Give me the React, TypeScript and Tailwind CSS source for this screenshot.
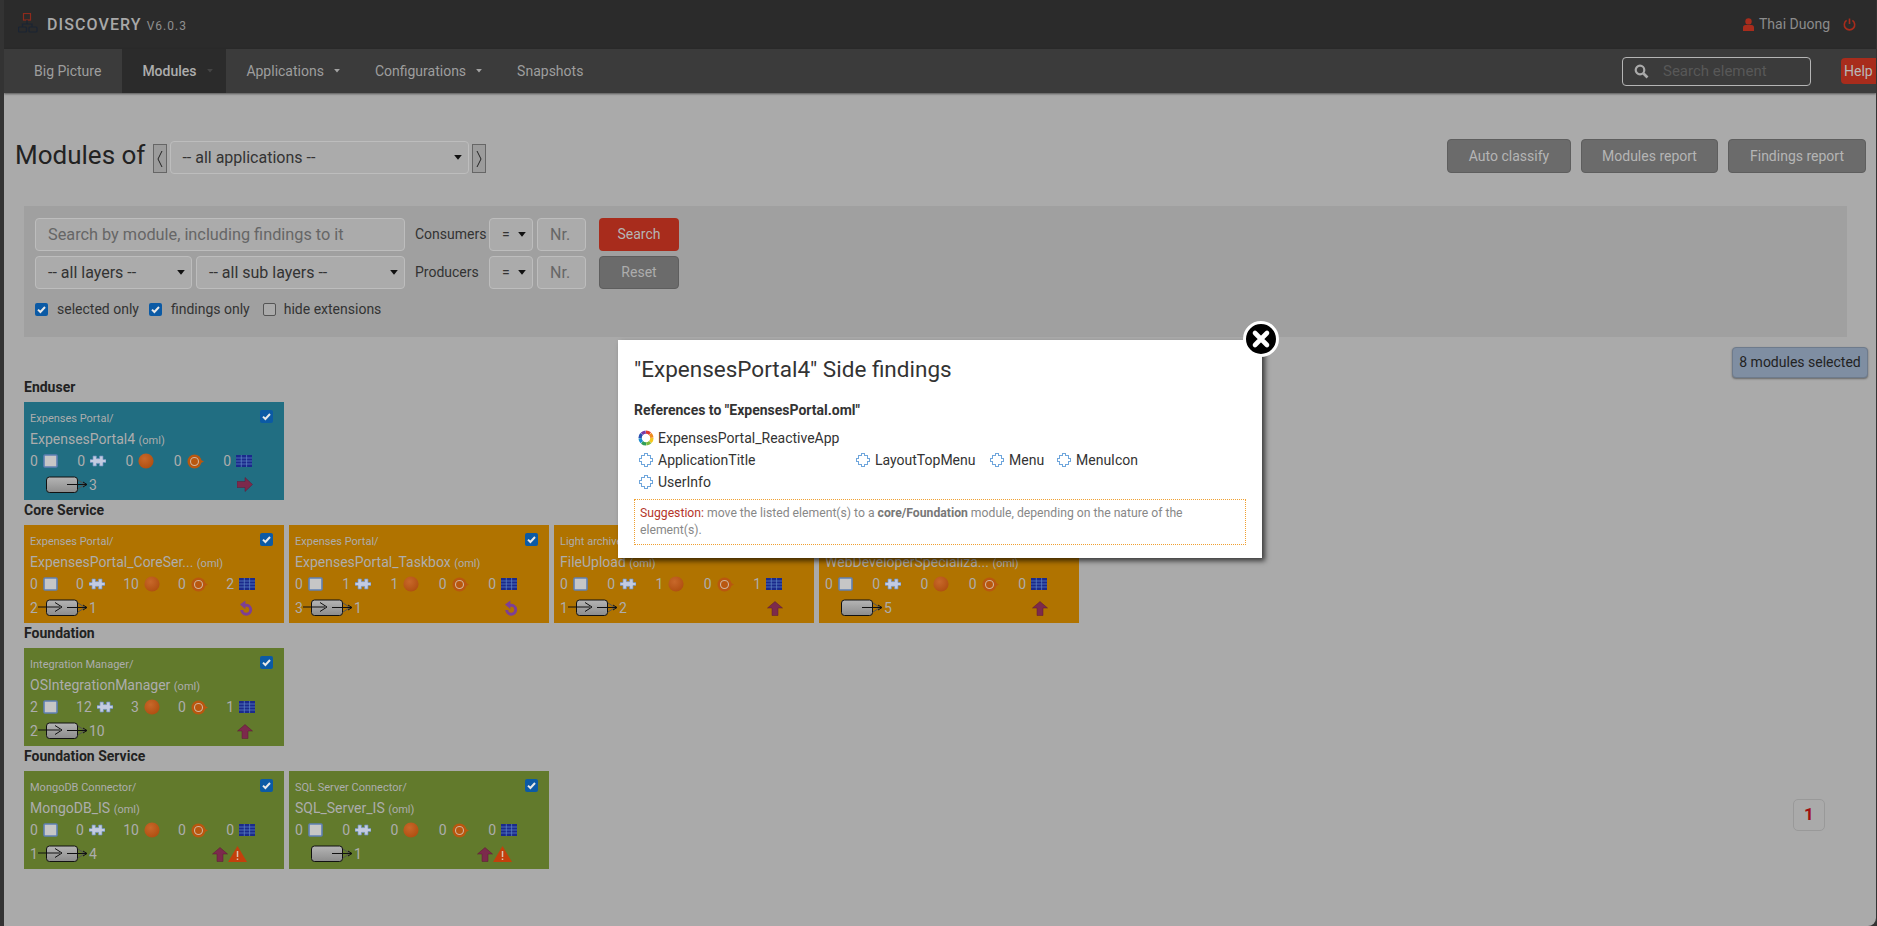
import React from "react";

const Caret = ({ c = "#111", w = 8 }: { c?: string; w?: number }) => (
  <svg width={w} height={w * 0.6} viewBox="0 0 8 5" className="shrink-0"><path d="M0 0h8L4 5z" fill={c} /></svg>
);

const Sel = ({ label, cls }: { label: string; cls: string }) => (
  <div className={`flex items-center justify-between rounded border border-[#bdbdbd] bg-[#ababab] text-[#333] ${cls}`}>
    <span>{label}</span>
    <Caret />
  </div>
);

const Check = ({ on = true }: { on?: boolean }) =>
  on ? (
    <div className="flex h-[13px] w-[13px] shrink-0 items-center justify-center rounded-[2px] bg-[#0b5aa5]">
      <svg width="11" height="11" viewBox="0 0 11 11"><path d="M2 5.6l2.4 2.4L9 3" fill="none" stroke="#e8e8e8" strokeWidth="2" /></svg>
    </div>
  ) : (
    <div className="h-[13px] w-[13px] shrink-0 rounded-[2px] border border-[#555] bg-[#aaa]" />
  );

const IcoBox = () => (
  <svg width="15" height="14" viewBox="0 0 15 14"><rect x="1" y="1" width="13" height="12" rx="1" fill="#c6c6c6" stroke="#5f80b4" strokeWidth="1.6" /></svg>
);
const IcoPuzzle = () => (
  <svg width="16" height="12" viewBox="0 0 16 12">
    <path d="M0 4.5h3V1h3.4v2.6h3.2V1H13v3.5h3v3h-3V11H9.6V8.4H6.4V11H3V7.5H0z" fill="#c3cbe0" stroke="#6d8fc0" strokeWidth=".7" />
  </svg>
);
const IcoBall = ({ id }: { id: string }) => (
  <svg width="16" height="16" viewBox="0 0 16 16">
    <defs>
      <radialGradient id={id} cx=".4" cy=".35" r=".75"><stop offset="0" stopColor="#c8682a" /><stop offset="1" stopColor="#ad4c0e" /></radialGradient>
    </defs>
    <circle cx="8" cy="8" r="7.6" fill={`url(#${id})`} />
  </svg>
);
const IcoRing = () => (
  <svg width="17" height="15" viewBox="0 0 17 15">
    <circle cx="7.5" cy="7.5" r="7" fill="#b9570f" />
    <circle cx="7.5" cy="7.5" r="4" fill="#b9570f" stroke="#d0b49c" strokeWidth="1.1" />
    <path d="M14 6l3 1.5-3 1.5z" fill="#b9570f" />
  </svg>
);
const IcoGrid = () => (
  <svg width="16" height="12" viewBox="0 0 16 12">
    <rect width="16" height="12" fill="#1b2a8c" />
    <path d="M0 3h16M0 6h16M0 9h16M5.3 0v12M10.6 0v12" stroke="#5f86c6" strokeWidth=".7" />
  </svg>
);
const IcoRight = () => (
  <svg width="16" height="16" viewBox="0 0 16 16"><path d="M0 4.5h8V0.5l7.5 7-7.5 7v-4H0z" fill="#7c2a4c" stroke="#5d1a35" strokeWidth=".5" /></svg>
);
const IcoUp = () => (
  <svg width="16" height="15" viewBox="0 0 16 15"><path d="M8 .5l7.5 6.5H11v7.5H5V7H.5z" fill="#7c2a4c" stroke="#5d1a35" strokeWidth=".5" /></svg>
);
const IcoUndo = () => (
  <svg width="14" height="17" viewBox="0 0 14 17">
    <path d="M5 5.2h2.5a4.5 4.5 0 1 1-4.8 4.8" fill="none" stroke="#7d3f95" strokeWidth="3" />
    <path d="M6.4 .4v8.8L1 4.6z" fill="#7d3f95" />
  </svg>
);
const IcoWarn = () => (
  <svg width="19" height="16" viewBox="0 0 19 16" className="mr-[6px]">
    <path d="M9.5 0L19 16H0z" fill="#c3400c" />
    <path d="M9.5 5v6M9.5 12.4v1.6" stroke="#d9c4b4" strokeWidth="1.5" />
  </svg>
);

const Flow = ({ left }: { left: boolean }) => (
  <svg width="50" height="18" viewBox="0 0 50 18" className="shrink-0">
    <defs>
      <linearGradient id="fg" x1="0" y1="0" x2="0" y2="1"><stop offset="0" stopColor="#b5b5b5" /><stop offset="1" stopColor="#8c8c8c" /></linearGradient>
    </defs>
    <rect x="8.5" y="1" width="31" height="15.5" rx="3" fill="url(#fg)" stroke="#111" strokeWidth="1" />
    <path d="M40 4l7 4.5-7 4.5" fill="none" stroke="#555" strokeWidth="1" />
    <path d="M29 8.5h20M45 6l4 2.5-4 2.5" fill="none" stroke="#111" strokeWidth="1" />
    {left && <path d="M0 8h22M17 3.5l7 4.5-7 4.5" fill="none" stroke="#111" strokeWidth="1" />}
  </svg>
);

type M = {
  bg: string;
  path: string;
  name: string;
  s: string[];
  l: string;
  r: string;
  st: string[];
  wide?: boolean;
};

const Stat = ({ n, children }: { n: string; children: React.ReactNode }) => (
  <div className="flex items-center gap-[5px]">
    <span>{n}</span>
    {children}
  </div>
);

const Card = ({ m, i }: { m: M; i: string }) => (
  <div className={`relative h-[98px] w-[260px] shrink-0 pl-[6px] pt-[10px] text-[14px] text-[#adadad] ${m.bg}`}>
    <div className="absolute right-[11px] top-[8px]"><Check /></div>
    <div className="h-[14px] text-[11px] leading-[14px]">{m.path}</div>
    <div className="mt-[1px] h-[24px] whitespace-nowrap leading-[24px]">
      {m.name} <span className="text-[11px]">(oml)</span>
    </div>
    <div className={`flex h-[20px] items-center justify-between ${m.wide ? "w-[225px]" : "w-[222px]"}`}>
      <Stat n={m.s[0]}><IcoBox /></Stat>
      <Stat n={m.s[1]}><IcoPuzzle /></Stat>
      <Stat n={m.s[2]}><IcoBall id={`b${i}`} /></Stat>
      <Stat n={m.s[3]}><IcoRing /></Stat>
      <Stat n={m.s[4]}><IcoGrid /></Stat>
    </div>
    <div className="mt-[4px] flex h-[20px] items-center pr-[31px]">
      <span className="w-[8px] shrink-0">{m.l}</span>
      <Flow left={m.l !== ""} />
      <span className="ml-[1px]">{m.r}</span>
      <div className="ml-auto flex items-center">
        {m.st.map((x, k) =>
          x === "right" ? <IcoRight key={k} /> : x === "up" ? <IcoUp key={k} /> : x === "undo" ? <IcoUndo key={k} /> : <IcoWarn key={k} />
        )}
      </div>
    </div>
  </div>
);

const TEAL = "bg-[#216e82]";
const ORANGE = "bg-[#b07300]";
const GREEN = "bg-[#627a2c]";

const sections: { t: string; cards: M[] }[] = [
  {
    t: "Enduser",
    cards: [{ bg: TEAL, path: "Expenses Portal/", name: "ExpensesPortal4", s: ["0", "0", "0", "0", "0"], l: "", r: "3", st: ["right"] }],
  },
  {
    t: "Core Service",
    cards: [
      { bg: ORANGE, path: "Expenses Portal/", name: "ExpensesPortal_CoreSer...", s: ["0", "0", "10", "0", "2"], l: "2", r: "1", st: ["undo"], wide: true },
      { bg: ORANGE, path: "Expenses Portal/", name: "ExpensesPortal_Taskbox", s: ["0", "1", "1", "0", "0"], l: "3", r: "1", st: ["undo"] },
      { bg: ORANGE, path: "Light archive/", name: "FileUpload", s: ["0", "0", "1", "0", "1"], l: "1", r: "2", st: ["up"] },
      { bg: ORANGE, path: "Web Developer/", name: "WebDeveloperSpecializa...", s: ["0", "0", "0", "0", "0"], l: "", r: "5", st: ["up"] },
    ],
  },
  {
    t: "Foundation",
    cards: [{ bg: GREEN, path: "Integration Manager/", name: "OSIntegrationManager", s: ["2", "12", "3", "0", "1"], l: "2", r: "10", st: ["up"], wide: true }],
  },
  {
    t: "Foundation Service",
    cards: [
      { bg: GREEN, path: "MongoDB Connector/", name: "MongoDB_IS", s: ["0", "0", "10", "0", "0"], l: "1", r: "4", st: ["up", "warn"], wide: true },
      { bg: GREEN, path: "SQL Server Connector/", name: "SQL_Server_IS", s: ["0", "0", "0", "0", "0"], l: "", r: "1", st: ["up", "warn"] },
    ],
  },
];

const Logo = () => (
  <svg width="20" height="20" viewBox="0 0 20 20" className="mb-[3px]">
    <rect x="5.5" y=".5" width="7" height="6.5" fill="none" stroke="#8e2a1c" strokeWidth="1.2" />
    <path d="M9 7v4M4.5 14v-3h9.5v3" fill="none" stroke="#1a2433" strokeWidth="1.2" />
    <rect x=".5" y="14" width="8" height="5" rx="1" fill="none" stroke="#1a2433" strokeWidth="1.2" />
    <rect x="11" y="14" width="8" height="5" rx="1" fill="none" stroke="#1a2433" strokeWidth="1.2" />
  </svg>
);

const ModalPuzzle = () => (
  <svg width="16" height="16" viewBox="0 0 16 16" className="shrink-0" shapeRendering="crispEdges">
    <path d="M3.5 3.5h3v-2h3v2h3v3h2v3h-2v3h-3v2h-3v-2h-3v-3h-2v-3h2z" fill="#fff" stroke="#6fa6dc" strokeWidth="1" />
  </svg>
);

const Rainbow = () => {
  const cols = ["#e03c31", "#f08c1e", "#f4c81e", "#7cba3c", "#2f9e58", "#1f8fd0", "#2a4fb0", "#7a3aa8"];
  return (
    <svg width="16" height="16" viewBox="0 0 16 16" className="shrink-0">
      {cols.map((c, i) => (
        <path key={c} d="M8 0.4a7.6 7.6 0 0 1 5 1.9L11 5a4.2 4.2 0 0 0-3-1.2z" fill={c} transform={`rotate(${i * 45} 8 8)`} />
      ))}
    </svg>
  );
};

const PItem = ({ t, cls = "" }: { t: string; cls?: string }) => (
  <div className={`flex items-center gap-[4px] ${cls}`}>
    <ModalPuzzle />
    <span>{t}</span>
  </div>
);

const Modal = () => (
  <div className="absolute left-[618px] top-[340px] h-[218px] w-[644px] bg-white pl-[16px] pr-[16px] pt-[13px] font-['Roboto',sans-serif] text-[14px] text-[#333] shadow-[3px_3px_5px_rgba(0,0,0,0.65)]">
    <div className="absolute right-[-17px] top-[-19px] h-[36px] w-[36px]">
      <svg width="36" height="36" viewBox="0 0 36 36">
        <circle cx="18" cy="18" r="16.5" fill="#000" stroke="#fff" strokeWidth="3" />
        <path d="M12 12l12 12M24 12L12 24" stroke="#fff" strokeWidth="4.6" strokeLinecap="round" />
      </svg>
    </div>
    <div className="h-[32px] text-[22.5px] leading-[32px]">"ExpensesPortal4" Side findings</div>
    <div className="mt-[15px] h-[20px] font-bold leading-[20px]">References to "ExpensesPortal.oml"</div>
    <div className="mt-[7px] flex h-[22px] items-center gap-[4px] pl-[4px]"><Rainbow /><span>ExpensesPortal_ReactiveApp</span></div>
    <div className="flex h-[22px] items-center pl-[4px]">
      <PItem t="ApplicationTitle" cls="w-[217px]" />
      <PItem t="LayoutTopMenu" cls="w-[134px]" />
      <PItem t="Menu" cls="w-[67px]" />
      <PItem t="MenuIcon" />
    </div>
    <div className="flex h-[22px] items-center pl-[4px]"><PItem t="UserInfo" /></div>
    <div className="mt-[6px] h-[46px] border border-dotted border-[#f0a030] py-[5px] pl-[5px] pr-[30px] text-[12.2px] leading-[17px] text-[#888]">
      <span className="text-[#b5362a]">Suggestion:</span> move the listed element(s) to a <b className="text-[#777]">core/Foundation</b> module, depending on the nature of the element(s).
    </div>
  </div>
);

const navText = "text-[14px] text-[#9e9e9e]";

export default function App() {
  return (
    <div className="relative h-[926px] w-[1877px] overflow-hidden bg-[#333] pl-[4px] pr-[1px] font-['Roboto',sans-serif]">
      <div className="flex h-full flex-col overflow-hidden rounded-br-[8px] bg-[#aaaaaa]">
        <header className="flex h-[49px] shrink-0 items-center bg-[#2b2b2b] pl-[14px] pr-[20px]">
          <Logo />
          <span className="ml-[9px] text-[16px] font-medium tracking-[1.1px] text-[#a8a8a8]">DISCOVERY</span>
          <span className="ml-[5px] mt-[2px] text-[12px] tracking-[1px] text-[#8f8f8f]">V6.0.3</span>
          <div className="ml-auto flex items-center">
            <svg width="11" height="13" viewBox="0 0 11 13"><circle cx="5.5" cy="3.4" r="3.2" fill="#a82c1c" /><path d="M0 13V9.5A2.5 2.5 0 0 1 2.5 7h6A2.5 2.5 0 0 1 11 9.5V13z" fill="#a82c1c" /></svg>
            <span className="ml-[5px] text-[14px] text-[#8c8c8c]">Thai Duong</span>
            <svg width="13" height="13" viewBox="0 0 13 13" className="ml-[13px]"><path d="M3.6 2.4a5.2 5.2 0 1 0 5.8 0" fill="none" stroke="#a82c1c" strokeWidth="1.6" /><path d="M6.5 0.5v5.5" stroke="#a82c1c" strokeWidth="1.6" /></svg>
          </div>
        </header>
        <nav className="flex h-[44px] shrink-0 items-stretch bg-[#3b3b3b] shadow-[0_1px_2px_rgba(0,0,0,0.5)]">
          <div className={`flex items-center pl-[30px] pr-[21px] ${navText}`}>Big Picture</div>
          <div className="flex w-[104px] items-center bg-[#2b2b2b] pl-[20px] text-[14px] font-medium text-[#adadad]">Modules<span className="ml-[10px]"><Caret c="#444" w={6} /></span></div>
          <div className={`flex items-center pl-[20px] ${navText}`}>Applications<span className="ml-[10px] mr-[2px]"><Caret c="#a3a3a3" w={6} /></span></div>
          <div className={`flex items-center pl-[33px] ${navText}`}>Configurations<span className="ml-[10px] mr-[2px]"><Caret c="#a3a3a3" w={6} /></span></div>
          <div className={`flex items-center pl-[33px] ${navText}`}>Snapshots</div>
          <div className="ml-auto flex items-center">
            <div className="flex h-[29px] w-[189px] items-center rounded-[4px] border border-[#b5b5b5] pl-[11px]">
              <svg width="15" height="15" viewBox="0 0 15 15"><circle cx="6" cy="6" r="4.3" fill="none" stroke="#aaa" strokeWidth="2.2" /><path d="M9.5 9.5l4 4" stroke="#aaa" strokeWidth="2.6" /></svg>
              <input placeholder="Search element" className="ml-[14px] w-[140px] bg-transparent text-[15px] outline-none placeholder:text-[#585858]" />
            </div>
            <div className="ml-[30px] flex h-[26px] w-[35px] items-center rounded-l-[4px] bg-[#a82c1c] pl-[3px] text-[14px] text-[#b8b8b8]">Help</div>
          </div>
        </nav>

        <main className="flex min-h-0 flex-1 flex-col">
          <div className="mt-[47px] flex h-[37px] shrink-0 items-center pl-[11px] pr-[10px]">
            <h1 className="mb-[6px] text-[26px] text-[#222]">Modules of</h1>
            <div className="ml-[8px] flex h-[29px] w-[14px] items-center justify-center border border-[#666] bg-[#9c9c9c]">
              <svg width="6" height="18" viewBox="0 0 6 18"><path d="M5 1L1 9l4 8" fill="none" stroke="#222" /></svg>
            </div>
            <Sel label="-- all applications --" cls="mb-[2px] ml-[3px] h-[33px] w-[299px] pl-[11px] pr-[6px] text-[16px]" />
            <div className="ml-[3px] flex h-[29px] w-[14px] items-center justify-center border border-[#666] bg-[#9c9c9c]">
              <svg width="6" height="18" viewBox="0 0 6 18"><path d="M1 1l4 8-4 8" fill="none" stroke="#222" /></svg>
            </div>
            <div className="ml-auto -mt-[1px] flex gap-[10px] self-start text-[14px] text-[#b5b5b5]">
              <div className="flex h-[34px] w-[124px] items-center justify-center rounded-[4px] border border-[#5e5e5e] bg-[#6b6b6b]">Auto classify</div>
              <div className="flex h-[34px] w-[137px] items-center justify-center rounded-[4px] border border-[#5e5e5e] bg-[#6b6b6b]">Modules report</div>
              <div className="flex h-[34px] w-[138px] items-center justify-center rounded-[4px] border border-[#5e5e5e] bg-[#6b6b6b]">Findings report</div>
            </div>
          </div>

          <section className="ml-[20px] mr-[29px] mt-[29px] h-[131px] shrink-0 bg-[#a0a0a0] pl-[11px] pt-[12px]">
            <div className="flex items-center">
              <input placeholder="Search by module, including findings to it" className="h-[33px] w-[370px] rounded border border-[#bdbdbd] bg-[#ababab] pl-[12px] text-[16.3px] outline-none placeholder:text-[#666]" />
              <span className="ml-[10px] w-[74px] text-[14px] text-[#333]">Consumers</span>
              <Sel label="=" cls="h-[33px] w-[44px] pl-[12px] pr-[6px] text-[14px]" />
              <input placeholder="Nr." className="ml-[4px] h-[33px] w-[49px] rounded border border-[#bdbdbd] bg-[#ababab] pl-[12px] text-[16px] outline-none placeholder:text-[#666]" />
              <div className="ml-[13px] flex h-[33px] w-[80px] items-center justify-center rounded-[4px] bg-[#a82c1c] text-[14px] text-[#b5b5b5]">Search</div>
            </div>
            <div className="mt-[5px] flex items-center">
              <Sel label="-- all layers --" cls="h-[33px] w-[157px] pl-[12px] pr-[6px] text-[16px]" />
              <Sel label="-- all sub layers --" cls="ml-[4px] h-[33px] w-[209px] pl-[12px] pr-[6px] text-[16px]" />
              <span className="ml-[10px] w-[74px] text-[14px] text-[#333]">Producers</span>
              <Sel label="=" cls="h-[33px] w-[44px] pl-[12px] pr-[6px] text-[14px]" />
              <input placeholder="Nr." className="ml-[4px] h-[33px] w-[49px] rounded border border-[#bdbdbd] bg-[#ababab] pl-[12px] text-[16px] outline-none placeholder:text-[#666]" />
              <div className="ml-[13px] flex h-[33px] w-[80px] items-center justify-center rounded-[4px] border border-[#5e5e5e] bg-[#6b6b6b] text-[14px] text-[#adadad]">Reset</div>
            </div>
            <div className="mt-[10px] flex items-center text-[14px] text-[#333]">
              <Check /><span className="ml-[9px]">selected only</span>
              <span className="ml-[10px]"><Check /></span><span className="ml-[9px]">findings only</span>
              <span className="ml-[13px]"><Check on={false} /></span><span className="ml-[8px]">hide extensions</span>
            </div>
          </section>

          <div className="mr-[8px] mt-[10px] flex h-[30px] shrink-0 justify-end">
            <div className="flex h-[31px] w-[136px] items-center justify-center rounded-[4px] border border-[#6e7b8c] bg-[#7f8ea2] text-[14px] text-[#222] shadow-[0_1px_2px_rgba(0,0,0,0.4)]">8 modules selected</div>
          </div>

          <div className="flex min-h-0 flex-1">
            <div className="flex-1 pl-[20px]">
              {sections.map((s, si) => (
                <div key={s.t}>
                  <div className="h-[25px] text-[14px] font-bold leading-[20px] text-[#222]">{s.t}</div>
                  <div className="flex gap-[5px]">
                    {s.cards.map((c, ci) => <Card key={c.name} m={c} i={`${si}-${ci}`} />)}
                  </div>
                </div>
              ))}
            </div>
            <div className="mb-[95px] mr-[51px] flex h-[32px] w-[32px] items-center justify-center self-end rounded-[5px] border border-[#999] text-[17px] font-bold text-[#a01010]">1</div>
          </div>
        </main>
      </div>
      <Modal />
    </div>
  );
}
